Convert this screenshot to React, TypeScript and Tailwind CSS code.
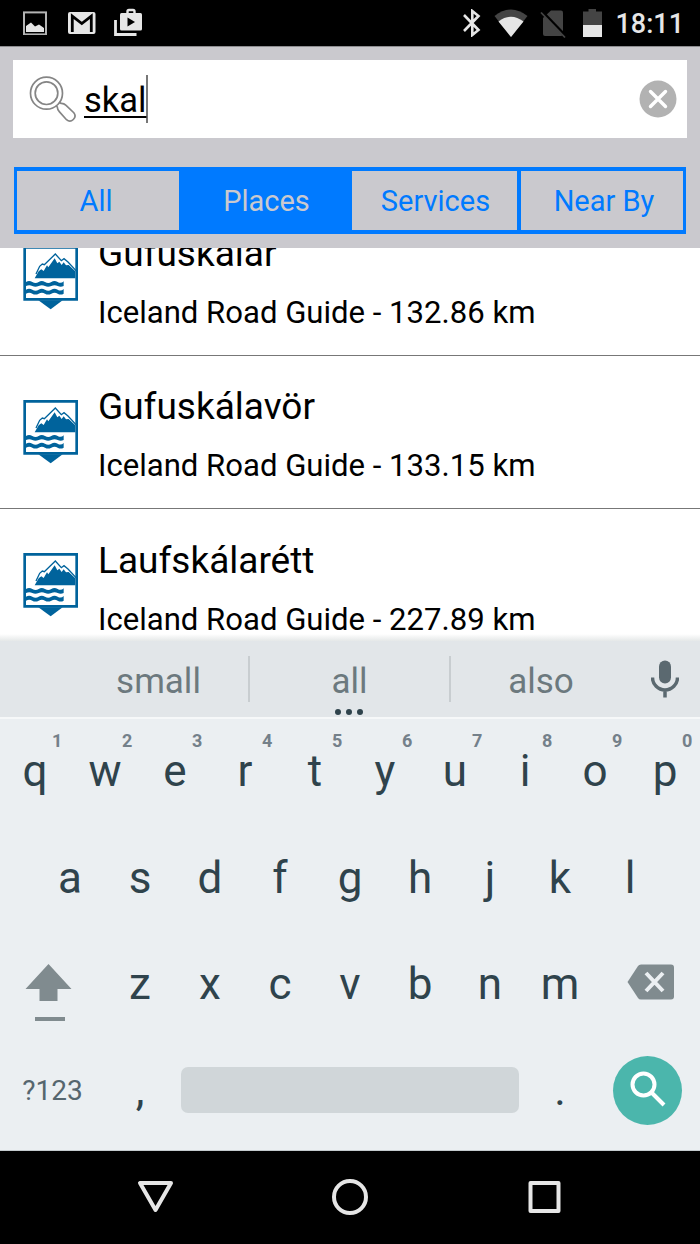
import type { ReactNode } from "react";

const places = [
  { name: "Gufuskálar", distance: "132.86" },
  { name: "Gufuskálavör", distance: "133.15" },
  { name: "Laufskálarétt", distance: "227.89" },
];

function StatusBar() {
  return (
    <div className="flex h-[46px] shrink-0 items-start bg-black text-[#e6e6e6]">
      <svg className="mt-[11px] ml-[23px] h-6 w-6" viewBox="0 0 24 24">
        <rect x="1" y="1.4" width="22" height="22" fill="none" stroke="#b4b4b4" strokeWidth="2" />
        <path d="M3 21v-6l5-3.500 4 4 4-2 5 3.500v4z" fill="currentColor" />
      </svg>
      <svg className="mt-3 ml-[21px] h-[22px] w-7" viewBox="0 0 28 22">
        <rect width="27.5" height="22" rx="2" fill="currentColor" />
        <path d="M4.3 20V4.2l9.5 7.4 9.500-7.400V20" fill="none" stroke="#000" strokeWidth="2.8" />
      </svg>
      <svg className="mt-2 ml-[18px] h-7 w-7" viewBox="0 0 28 28">
        <path d="M1.5 12v14.500h21" fill="none" stroke="currentColor" strokeWidth="2.8" />
        <path d="M13.5 7V3.500q0-1.500 1.500-1.500h4q1.500 0 1.500 1.500V7" fill="none" stroke="currentColor" strokeWidth="2.4" />
        <rect x="6" y="5" width="22" height="17.500" rx="1.5" fill="currentColor" />
        <path d="M13.5 9.500v9l7.500-4.500z" fill="#000" />
      </svg>
      <div className="ml-auto flex items-start">
        <svg className="mt-[9px] h-7 w-[18px]" viewBox="0 0 18 28">
          <path d="M1 6l14.5 15-6.200 5V2l6.200 5L1 22" fill="none" stroke="currentColor" strokeWidth="2.6" />
        </svg>
        <svg className="mt-[9px] ml-[13px] h-7 w-[34px]" viewBox="0 0 34 28">
          <path d="M0.5 7Q17-6 33.500 7L17 28z" fill="#444" />
          <path d="M4.5 12.500Q17 3 29.500 12.500L17 28z" fill="currentColor" />
        </svg>
        <svg className="mt-[9px] ml-3 h-[30px] w-[26px]" viewBox="0 0 26 30">
          <path d="M11 1.5h10q2 0 2 2V25q0 2-2 2H5q-2 0-2-2V9z" fill="#444" />
          <path d="M2 2.5l25 26" stroke="#000" strokeWidth="3" />
          <path d="M1 3.5l24 25" stroke="#444" strokeWidth="1.8" />
        </svg>
        <svg className="mt-[9px] ml-[17px] h-7 w-[19px]" viewBox="0 0 19 28">
          <path d="M0 2.5h5.500V0h7.500v2.500H19V16H0z" fill="#444" />
          <path d="M0 16h19v12H0z" fill="currentColor" />
        </svg>
        <span className="mr-4 ml-[13px] text-[27px] leading-[49px] font-medium">18:11</span>
      </div>
    </div>
  );
}

function SearchField() {
  return (
    <div className="mx-[13px] flex h-[78px] items-center bg-white">
      <svg className="ml-4 h-12 w-12" viewBox="0 0 48 48" fill="none" stroke="#858585" strokeWidth="1.7">
        <circle cx="17.5" cy="18.200" r="16" />
        <circle cx="17.5" cy="18.200" r="11.300" />
        <path d="M27 30.500l1.300 1.500q.2 3 2 4.700l7.200 8q3.500 3 6.800-.2t.5-6.800l-8-7.500q-2-2-4.800-1.800l-2-1.400" />
      </svg>
      <div className="ml-[7px] flex h-[48px] items-center border-r-2 border-[#777]">
        <span className="pt-[2px] text-[34.500px] leading-9 text-black underline decoration-[1.500px] underline-offset-[4px]">skal</span>
      </div>
      <button className="mr-[10px] ml-auto">
        <svg className="h-[38px] w-[38px]" viewBox="0 0 38 38">
          <circle cx="19" cy="19" r="18.500" fill="#b2b2b2" />
          <path d="M11.5 11.500l15 15m0-15l-15 15" stroke="#fff" strokeWidth="3.400" strokeLinecap="round" />
        </svg>
      </button>
    </div>
  );
}

function Tabs() {
  return (
    <div className="mx-[14px] mt-[29px] flex h-[67px] border-x-[3px] border-y-4 border-[#007aff] text-[29px] leading-[61px] text-[#007aff]">
      <button className="w-[162px] pr-1">All</button>
      <button className="w-[173px] bg-[#007aff] pl-[2px] text-[#cac9ce]">Places</button>
      <button className="w-[165px] pl-[2px]">Services</button>
      <button className="flex-1 border-l-[4px] border-[#007aff] pl-1">Near By</button>
    </div>
  );
}

function RoadGuideIcon() {
  return (
    <svg className="ml-[23px] h-16 w-[55px] shrink-0" viewBox="69 60 165 192" fill="#00639c">
      <path d="M70 60h164v164H70zM78 68v148h148V68z" fillRule="evenodd" />
      <path d="M115 223h73l-36 27z" />
      <path d="M104 157L116 136L124 130L131 135L141 118L145 124L164 97L172 112L178 107L185 117L191 109L198 118L206 117L226 136V157z" />
      <path d="M108 144L119 121L127 114L133 116L166 84L184 104L192 98L204 108L228 134" fill="none" stroke="#00639c" strokeWidth="4" />
      <path d="M78 168q9-6 19 0t19 0 19 0 19 0 19 0 18-2v14q-9 5-18 0t-19 0-19 0-19 0-19 0-19 0z" />
      <path d="M78 191q9-6 19 0t19 0 19 0 19 0 19 0 18-2v14q-9 5-18 0t-19 0-19 0-19 0-19 0-19 0z" />
    </svg>
  );
}

function PlaceRow({ name, distance }: { name: string; distance: string }) {
  return (
    <div className="flex h-[153.500px] shrink-0 items-center border-b border-[#777]">
      <RoadGuideIcon />
      <div className="ml-5 pt-[9px] text-black">
        <div className="text-[37px] leading-[59px]">{name}</div>
        <div className="text-[31.100px] leading-[59px]">Iceland Road Guide - {distance} km</div>
      </div>
    </div>
  );
}

function Suggestions() {
  return (
    <div className="relative flex h-[78px] shrink-0 items-center border-b-2 border-[#f6f8f9] bg-[#e2e6e9] text-center text-[35px] text-[#6c797e]">
      <span className="ml-[69px] w-[179px] pt-[7px]">small</span>
      <span className="flex h-[46px] w-[203px] items-center justify-center border-x-2 border-[#c8cdd0] pt-[7px]">all</span>
      <span className="w-[180px] pt-[7px]">also</span>
      <svg className="ml-5 h-[38px] w-7" viewBox="0 0 28 38">
        <rect x="8" y="0.5" width="12" height="23" rx="6" fill="#5b6970" />
        <path d="M1.5 17.500a12.300 12.300 0 0 0 25 0M14 29v8.500" fill="none" stroke="#5b6970" strokeWidth="3.500" />
      </svg>
      <div className="absolute bottom-[2.500px] left-[335px] flex gap-[5.500px]">
        <i className="size-[5.500px] rounded-full bg-[#2f434c]" />
        <i className="size-[5.500px] rounded-full bg-[#2f434c]" />
        <i className="size-[5.500px] rounded-full bg-[#2f434c]" />
      </div>
    </div>
  );
}

function Key({ children, hint }: { children: ReactNode; hint?: string }) {
  return (
    <button className="relative flex h-full w-[70px] items-center justify-center">
      {children}
      {hint && <sup className="absolute top-3 left-[52px] text-[18px] leading-5 font-bold text-[#74808a]">{hint}</sup>}
    </button>
  );
}

function Keyboard() {
  return (
    <div className="flex h-[432px] shrink-0 flex-col border-b border-[#c4cacd] bg-[#ebeff2] text-[44px] text-[#2f434c]">
      <div className="flex h-[103px]">
        {[..."qwertyuiop"].map((letter, i) => (
          <Key key={letter} hint={String((i + 1) % 10)}>{letter}</Key>
        ))}
      </div>
      <div className="flex h-[108px] justify-center pt-[3px]">
        {[..."asdfghjkl"].map((letter) => <Key key={letter}>{letter}</Key>)}
      </div>
      <div className="flex h-[107px] items-center">
        <div className="w-[105px]">
          <svg className="mt-[18px] ml-[25px] h-[58px] w-[47px]" viewBox="0 0 47 58" fill="#808b8f">
            <path d="M23.5 0L46.500 25H32.500v12h-18V25H0.500z" />
            <path d="M10 53h30v4H10z" />
          </svg>
        </div>
        {[..."zxcvbnm"].map((letter) => <Key key={letter}>{letter}</Key>)}
        <svg className="mb-[3px] ml-8 h-9 w-[47px]" viewBox="0 0 47 36">
          <path d="M0.5 18L11 2q1-1.500 3-1.500h30q3 0 3 3v29q0 3-3 3H14q-2 0-3-1.500z" fill="#808b8f" />
          <path d="M19 9l17 18m0-18L19 27" stroke="#ebeff2" strokeWidth="4" />
        </svg>
      </div>
      <div className="flex h-[106px] items-center">
        <button className="w-[105px] pt-[2px] text-[28px] text-[#56666e]">?123</button>
        <Key>,</Key>
        <button className="ml-[6px] h-[46px] w-[338px] rounded-[7px] bg-[#d0d6d9]" />
        <div className="ml-[6px] h-full"><Key>.</Key></div>
        <button className="ml-[18px] flex size-[69px] items-center justify-center rounded-full bg-[#4bb6ac]">
          <svg className="mb-[2px] h-9 w-9" viewBox="0 0 36 36" fill="none" stroke="#fff" strokeWidth="4">
            <circle cx="13.5" cy="13.500" r="11" />
            <path d="M22 22l12 12" />
          </svg>
        </button>
      </div>
    </div>
  );
}

function NavigationBar() {
  return (
    <div className="flex flex-1 items-center justify-between bg-black px-[136px] pb-[1px]">
      <svg className="h-10 w-10" viewBox="0 0 40 40" fill="none" stroke="#e6e6e6" strokeWidth="4" strokeLinejoin="round">
        <path d="M4 6h31L19.500 33z" />
      </svg>
      <svg className="h-10 w-10" viewBox="0 0 40 40" fill="none" stroke="#e6e6e6" strokeWidth="4">
        <circle cx="20" cy="20" r="16" />
      </svg>
      <svg className="h-10 w-10" viewBox="0 0 40 40" fill="none" stroke="#e6e6e6" strokeWidth="4" strokeLinejoin="round">
        <path d="M6.5 6h28v28h-28z" />
      </svg>
    </div>
  );
}

export default function App() {
  return (
    <main className="flex h-[1244px] w-[700px] flex-col overflow-hidden bg-white font-['Roboto',sans-serif]">
      <StatusBar />
      <header className="h-[202px] shrink-0 border-t border-[#8d8d90] bg-[#cac9ce] pt-[13px]">
        <SearchField />
        <Tabs />
      </header>
      <div className="relative h-[393px] shrink-0 overflow-hidden">
        <div className="-mt-[46px] flex flex-col">
          {places.map((place) => <PlaceRow key={place.name} {...place} />)}
        </div>
        <div className="absolute inset-x-0 bottom-0 h-[7px] bg-linear-to-b from-transparent to-[#e5e8e8]" />
      </div>
      <Suggestions />
      <Keyboard />
      <NavigationBar />
    </main>
  );
}
